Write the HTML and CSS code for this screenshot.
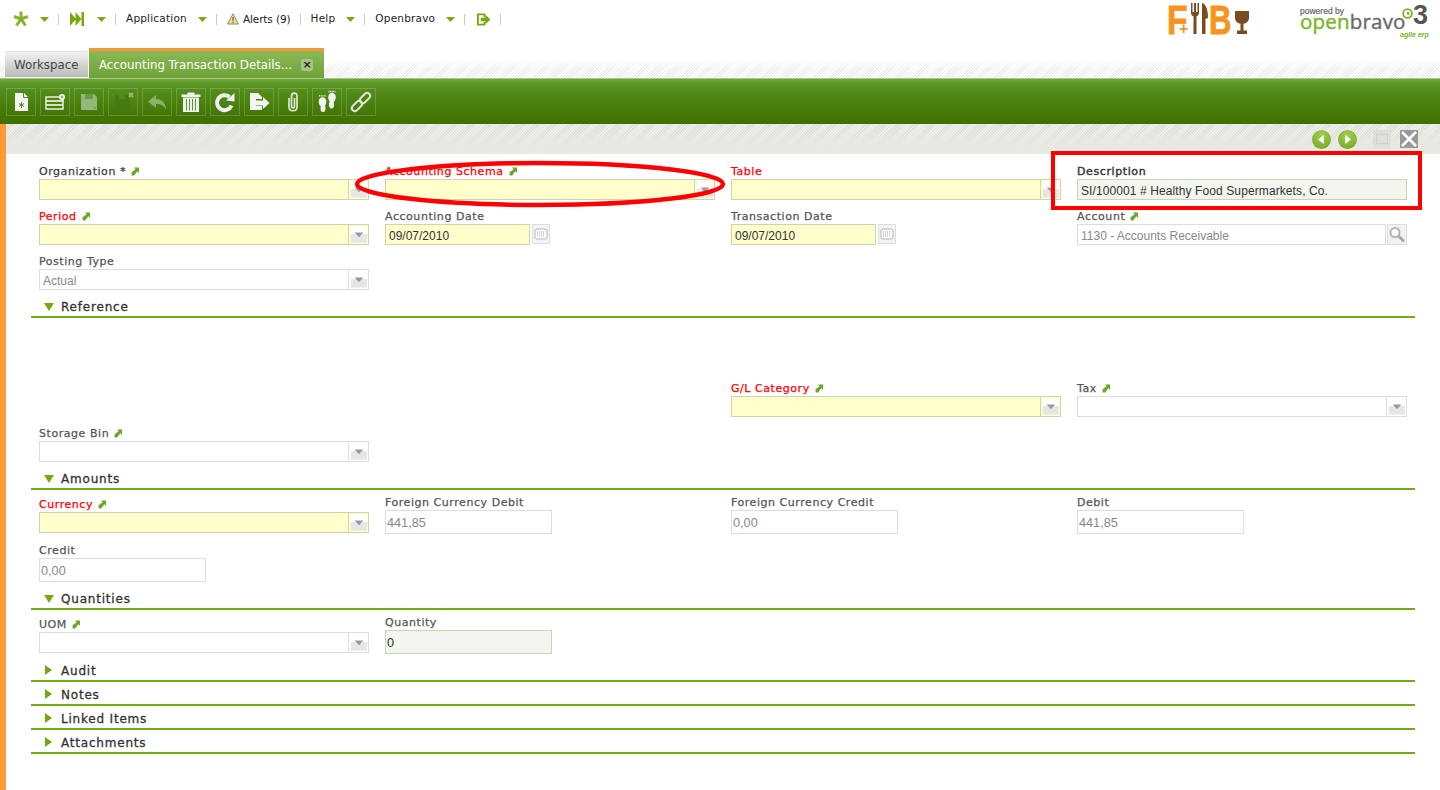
FILE: index.html
```html
<!DOCTYPE html>
<html lang="en">
<head>
<meta charset="utf-8">
<title>Accounting Transaction Details</title>
<link rel="stylesheet" href="styles.css">
</head>
<body>
<svg class="defs" width="0" height="0">
  <symbol id="jump" viewBox="0 0 8 9"><path d="M3 .5H8V6L6.300 4.300L3.200 8.500H.6V5.200L4.600 2.200Z" fill="#6ba52a"/></symbol>
  <symbol id="down" viewBox="0 0 10 6" preserveAspectRatio="none"><path d="M0 0H10L5 6Z" fill="#76a80f"/></symbol>
  <symbol id="right" viewBox="0 0 7 10" preserveAspectRatio="none"><path d="M0 0L7 5L0 10Z" fill="#6fa80f"/></symbol>
  <symbol id="drop" viewBox="0 0 20 19"><rect x="2" y="1" width="17" height="17" fill="#fff"/><rect x="2" y="9" width="17" height="9" fill="#e6e6e6"/><path d="M6 7.500H15L10.500 12.500Z" fill="#999"/></symbol>
  <symbol id="cal" viewBox="0 0 18 20"><rect x=".5" y=".5" width="17" height="19" fill="#f4f4f4" stroke="#ddd"/><rect x="3" y="5" width="12" height="10" rx="2" fill="#fff" stroke="#b5b5b5"/><path d="M5 8H13M5 10H13M5 12H13" stroke="#aaa" stroke-dasharray="1 1"/></symbol>
</svg>

<header class="nav">
  <div class="nav-menu">
    <svg class="ic-star" viewBox="0 0 16 16"><path d="M8 8V.5M8 8L1 5.500M8 8L15 5.500M8 8L3.500 14.500M8 8L12.500 14.500" stroke="#85b52d" stroke-width="3" fill="none"/></svg>
    <svg class="caret"><use href="#down"/></svg>
    <span class="sep"></span>
    <svg class="ic-next" viewBox="0 0 14 14"><path d="M0 0L6 7L0 14ZM5.500 0L11.500 7L5.500 14Z" fill="#76a80f"/><rect x="11.500" y="0" width="2.500" height="14" fill="#76a80f"/></svg>
    <svg class="caret wide-gap"><use href="#down"/></svg>
    <span class="sep"></span>
    <span class="nav-item">Application</span>
    <svg class="caret"><use href="#down"/></svg>
    <span class="sep"></span>
    <svg class="ic-warn" viewBox="0 0 12 12"><path d="M6 .8L11.500 11H.5Z" fill="#f2dc8a" stroke="#8d8a6d"/><path d="M6 4V8M6 9V10" stroke="#444"/></svg>
    <span class="nav-item alerts">Alerts (9)</span>
    <span class="sep"></span>
    <span class="nav-item">Help</span>
    <svg class="caret"><use href="#down"/></svg>
    <span class="sep"></span>
    <span class="nav-item">Openbravo</span>
    <svg class="caret"><use href="#down"/></svg>
    <span class="sep"></span>
    <svg class="ic-exit" viewBox="0 0 15 13"><path d="M0 0H9V4H7V2H2V11H7V9H9V13H0Z" fill="#76a80f"/><path d="M4 4.500H9V1.500L14.500 6.500L9 11.500V8.500H4Z" fill="#76a80f"/></svg>
    <span class="sep"></span>
  </div>
  <div class="brand">
    <div class="fb">
      <span class="fb-f">F</span><span class="fb-plus">+</span>
      <svg class="fb-cut" viewBox="0 0 17 31"><path d="M0 0H1.500V9H3V0H5V9H6.500V0H8V10C8 12 6.500 13 5.500 13.500V31H2.500V13.500C1.500 13 0 12 0 10ZM11 0C15 1 17 7 17 15L14.500 16V31H11Z" fill="#7a4a21"/></svg>
      <span class="fb-b">B</span>
      <svg class="fb-glass" viewBox="0 0 14 23"><path d="M0 0H14V7C14 10.500 11 12.500 8.500 12.800V19.500H12V23H2V19.500H5.500V12.800C3 12.500 0 10.500 0 7Z" fill="#7a4a21"/></svg>
    </div>
    <div class="ob">
      <span class="ob-pow">powered by</span>
      <span class="ob-name"><span class="ob-g">open</span>bravo</span>
      <span class="ob-agile">agile erp</span>
      <svg class="ob-swirl" viewBox="0 0 10 10"><circle cx="5" cy="5" r="4" fill="none" stroke="#78b428" stroke-width="1.600"/><circle cx="5.500" cy="5" r="1.300" fill="#78b428"/></svg>
      <span class="ob-three">3</span>
    </div>
  </div>
</header>

<nav class="tabs">
  <div class="tab-ws">Workspace</div>
  <div class="tab-active">
    <span>Accounting Transaction Details...</span>
    <span class="tab-x">×</span>
  </div>
</nav>

<div class="toolbar">
  <button class="tb"><svg viewBox="0 0 24 24"><path d="M6 3H15L19 7V21H6Z" fill="#f4f4f4"/><path d="M14.500 3V7.500H19" fill="none" stroke="#4f8a1f"/><path d="M12.500 12V18M10 13.500L15 16.500M15 13.500L10 16.500" stroke="#4f8a1f"/></svg></button>
  <button class="tb"><svg viewBox="0 0 24 24"><rect x="3" y="7" width="17" height="12" fill="none" stroke="#fff" stroke-width="1.300"/><path d="M3 11H20M3 15H20" stroke="#fff" stroke-width="1.300"/><circle cx="19" cy="7" r="3" fill="#fff"/><path d="M17.500 7H20.500M19 5.500V8.500" stroke="#4f8a1f" stroke-width=".8"/></svg></button>
  <button class="tb"><svg viewBox="0 0 24 24"><path d="M4 4H17L20 7V20H4Z" fill="#94b878"/><rect x="8" y="4" width="8" height="5" fill="#6a9c44"/><rect x="17" y="17" width="1.500" height="1.500" fill="#5a8c30"/></svg></button>
  <button class="tb"><svg viewBox="0 0 24 24"><path d="M4 5H16L19 8V20H4Z" fill="#437a14"/><rect x="8" y="5" width="6" height="4" fill="#4f8a1f"/><path d="M18 3L22 7M22 3L18 7" stroke="#98b87c" stroke-width="2"/></svg></button>
  <button class="tb"><svg viewBox="0 0 24 24"><path d="M11 5V9C17 9 21 13 21 20C19 15 16 14 11 14V18L3 11.500Z" fill="#8cb26c"/></svg></button>
  <button class="tb"><svg viewBox="0 0 24 24"><path d="M2.500 4.500H21.500V7H2.500ZM8.500 2.500H15.500V4.500H8.500ZM4 7.500H20V22H4Z" fill="#f0f0f0"/><path d="M7.500 9V20.500M10.500 9V20.500M13.500 9V20.500M16.500 9V20.500" stroke="#5d9430" stroke-width="1"/></svg></button>
  <button class="tb"><svg viewBox="0 0 24 24"><path d="M18.500 15.500A7.500 7.500 0 1 1 16.500 7" fill="none" stroke="#f0f0f0" stroke-width="4"/><path d="M13 10.500L21.500 11.500V3Z" fill="#f0f0f0"/></svg></button>
  <button class="tb"><svg viewBox="0 0 24 24"><path d="M3 3H11L15 7V9H9V16H15V20H3Z" fill="#f4f4f4"/><path d="M9 10.500H16V7L22.500 13L16 19V15.500H9Z" fill="#f4f4f4"/></svg></button>
  <button class="tb"><svg viewBox="0 0 24 24"><path d="M8 8V17C8 22 16 22 16 17V6.500C16 2 10.500 2 10.500 6.500V16C10.500 18.500 13.500 18.500 13.500 16V8" fill="none" stroke="#dfe6d8" stroke-width="1.700"/></svg></button>
  <button class="tb"><svg viewBox="0 0 24 24" fill="#f4f4f4"><ellipse cx="7.500" cy="12" rx="3.800" ry="4.800"/><ellipse cx="8" cy="18.500" rx="2.500" ry="3.500"/><ellipse cx="17" cy="7.500" rx="3.800" ry="4.800"/><ellipse cx="16.500" cy="14.500" rx="2.500" ry="4"/><path d="M4 5.800H11M13.500 1.500H20.500" stroke="#f4f4f4" stroke-width="1.300" stroke-dasharray="1 .6"/></svg></button>
  <button class="tb"><svg viewBox="0 0 24 24" fill="none" stroke="#dfe3da" stroke-width="2"><rect x="2" y="13" width="12" height="6" rx="3" transform="rotate(-45 8 16)"/><rect x="10" y="5" width="12" height="6" rx="3" transform="rotate(-45 16 8)"/></svg></button>
</div>

<main class="content">
  <div class="status">
    <span class="round"><svg viewBox="0 0 8 8"><path d="M6 0V8L1 4Z" fill="#fff"/></svg></span>
    <span class="round"><svg viewBox="0 0 8 8"><path d="M2 0V8L7 4Z" fill="#fff"/></svg></span>
    <span class="max"><span></span></span>
    <span class="close"><svg viewBox="0 0 18 18"><path d="M2 2L16 16M16 2L2 16" stroke="#fff" stroke-width="2.600"/></svg></span>
  </div>

  <form class="form">
    <div class="grid">
      <div class="field"><label class="lbl dk">Organization * <svg class="jump"><use href="#jump"/></svg></label><div class="combo req"><span class="val"></span><svg class="arrow"><use href="#drop"/></svg></div></div>
      <div class="field"><label class="lbl red">Accounting Schema <svg class="jump"><use href="#jump"/></svg></label><div class="combo req"><span class="val"></span><svg class="arrow"><use href="#drop"/></svg></div></div>
      <div class="field"><label class="lbl red">Table</label><div class="combo req"><span class="val"></span><svg class="arrow"><use href="#drop"/></svg></div></div>
      <div class="field"><label class="lbl strong">Description</label><div class="input ro wide"><span class="val dark spaced">SI/100001 # Healthy Food Supermarkets, Co.</span></div></div>

      <div class="field"><label class="lbl red">Period <svg class="jump"><use href="#jump"/></svg></label><div class="combo req"><span class="val"></span><svg class="arrow"><use href="#drop"/></svg></div></div>
      <div class="field"><label class="lbl">Accounting Date</label><div class="date"><div class="input req d"><span class="val dark">09/07/2010</span></div><svg class="cal"><use href="#cal"/></svg></div></div>
      <div class="field"><label class="lbl">Transaction Date</label><div class="date"><div class="input req d"><span class="val dark">09/07/2010</span></div><svg class="cal"><use href="#cal"/></svg></div></div>
      <div class="field"><label class="lbl">Account <svg class="jump"><use href="#jump"/></svg></label><div class="search"><div class="input plain grow"><span class="val">1130 - Accounts Receivable</span></div><svg class="lens" viewBox="0 0 21 21"><rect x="1.500" y=".5" width="19" height="20" fill="#f2f2f2" stroke="#ddd"/><circle cx="9" cy="8.500" r="4.500" fill="#fff" stroke="#b5b5b5" stroke-width="2"/><path d="M12.500 12L18 17.500" stroke="#aaa" stroke-width="3"/></svg></div></div>

      <div class="field"><label class="lbl">Posting Type</label><div class="combo"><span class="val">Actual</span><svg class="arrow"><use href="#drop"/></svg></div></div>
    </div>

    <h2 class="sec"><svg class="tri"><use href="#down"/></svg>Reference</h2>
    <div class="grid after-ref">
      <div class="field c3"><label class="lbl red">G/L Category <svg class="jump"><use href="#jump"/></svg></label><div class="combo req"><span class="val"></span><svg class="arrow"><use href="#drop"/></svg></div></div>
      <div class="field"><label class="lbl">Tax <svg class="jump"><use href="#jump"/></svg></label><div class="combo"><span class="val"></span><svg class="arrow"><use href="#drop"/></svg></div></div>
      <div class="field c1"><label class="lbl">Storage Bin <svg class="jump"><use href="#jump"/></svg></label><div class="combo"><span class="val"></span><svg class="arrow"><use href="#drop"/></svg></div></div>
    </div>

    <h2 class="sec"><svg class="tri"><use href="#down"/></svg>Amounts</h2>
    <div class="grid">
      <div class="field"><label class="lbl red">Currency <svg class="jump"><use href="#jump"/></svg></label><div class="combo req"><span class="val"></span><svg class="arrow"><use href="#drop"/></svg></div></div>
      <div class="field numf"><label class="lbl">Foreign Currency Debit</label><div class="input plain num"><span class="val">441,85</span></div></div>
      <div class="field numf"><label class="lbl">Foreign Currency Credit</label><div class="input plain num"><span class="val">0,00</span></div></div>
      <div class="field numf"><label class="lbl">Debit</label><div class="input plain num"><span class="val">441,85</span></div></div>
      <div class="field tall"><label class="lbl">Credit</label><div class="input plain num"><span class="val">0,00</span></div></div>
    </div>

    <h2 class="sec"><svg class="tri"><use href="#down"/></svg>Quantities</h2>
    <div class="grid">
      <div class="field"><label class="lbl">UOM <svg class="jump"><use href="#jump"/></svg></label><div class="combo"><span class="val"></span><svg class="arrow"><use href="#drop"/></svg></div></div>
      <div class="field numf"><label class="lbl">Quantity</label><div class="input ro num"><span class="val dark">0</span></div></div>
    </div>

    <h2 class="sec closed"><svg class="tri-r"><use href="#right"/></svg>Audit</h2>
    <h2 class="sec closed"><svg class="tri-r"><use href="#right"/></svg>Notes</h2>
    <h2 class="sec closed"><svg class="tri-r"><use href="#right"/></svg>Linked Items</h2>
    <h2 class="sec closed"><svg class="tri-r"><use href="#right"/></svg>Attachments</h2>
  </form>
</main>

<svg class="mark-ellipse" viewBox="0 0 372 52"><ellipse cx="186" cy="26" rx="183" ry="21" fill="none" stroke="#ff0000" stroke-width="4.500"/></svg>
<div class="mark-rect"></div>
</body>
</html>
```
FILE: styles.css
```css
* { box-sizing: border-box; }
html, body { margin: 0; padding: 0; height: 790px; overflow: hidden; background: #fff; }
body { position: relative; font-family: "DejaVu Sans", Verdana, sans-serif; color: #333; }
.defs { position: absolute; }

.nav { height: 48px; display: flex; justify-content: space-between; }
.nav-menu { display: flex; align-items: center; height: 38px; padding-left: 13px; font-size: 10.500px; color: #222; }
.nav-item { letter-spacing: .2px; white-space: nowrap; position: relative; top: -1px; }
.nav-item.alerts { letter-spacing: -.1px; top: 0; }
.ic-star { width: 16px; height: 16px; }
.caret { width: 9px; height: 5px; margin-left: 11px; }
.caret.wide-gap { margin-left: 13px; }
.sep { width: 1px; height: 11px; background: #c8c8c8; margin: 0 10px 0 9px; }
.ic-next { width: 14px; height: 14px; margin-left: 1px; }
.ic-warn { width: 12px; height: 12px; margin-right: 4px; }
.ic-exit { width: 14px; height: 13px; margin-left: 2px; }

.brand { position: relative; width: 280px; }
.fb { position: absolute; left: 9px; top: 3px; width: 90px; height: 32px; }
.fb-f, .fb-b { position: absolute; top: 2px; font: bold 40px/30px "Liberation Sans", sans-serif; color: #f7941d; -webkit-text-stroke: .8px #f7941d; transform-origin: 0 50%; }
.fb-f { left: -2px; transform: scaleX(.84); }
.fb-b { left: 40px; transform: scaleX(.78); }
.fb-plus { position: absolute; left: 10px; top: 19px; font: bold 16px/14px "Liberation Sans", sans-serif; color: #f7941d; }
.fb-cut { position: absolute; left: 22px; top: 0; width: 17px; height: 31px; }
.fb-glass { position: absolute; left: 66px; top: 8px; width: 14px; height: 23px; }
.ob { position: absolute; left: 119px; top: 2px; width: 150px; height: 40px; }
.ob-pow { position: absolute; left: 21px; top: 5px; font: 8.500px/8px "Liberation Sans", sans-serif; color: #666; -webkit-text-stroke: .2px #666; white-space: nowrap; }
.ob-name { position: absolute; left: 21px; top: 13px; font: 20.500px/12px "Open Sans", sans-serif; letter-spacing: .2px; color: #6b6b6b; -webkit-text-stroke: .4px #6b6b6b; white-space: nowrap; }
.ob-g { color: #78b428; -webkit-text-stroke: .4px #78b428; }
.ob-agile { position: absolute; left: 121px; top: 29px; font: italic bold 7px/8px "Liberation Sans", sans-serif; color: #78b428; white-space: nowrap; }
.ob-swirl { position: absolute; left: 123px; top: 6px; width: 11px; height: 11px; }
.ob-three { position: absolute; left: 134px; top: -2px; font: bold 27px/30px "Liberation Sans", sans-serif; color: #555; }

.tabs { height: 30px; display: flex; align-items: flex-end; padding-left: 5px;
  background: linear-gradient(#fff 12px, rgba(255,255,255,0) 22px), repeating-linear-gradient(135deg, #ececec 0 1px, #fff 1px 2px); }
.tab-ws { width: 84px; height: 27px; padding: 6px 0 0 9px; font: 11.800px/14px "DejaVu Sans", sans-serif; color: #444; background: linear-gradient(#f2f2f2, #b9bab6); border-top: 1px solid #e4e4e4; border-right: 1px solid #fff; border-bottom: 1px solid #f4f4f4; }
.tab-active { width: 235px; height: 30px; border-top: 3px solid #f7973a; background: linear-gradient(#8bb954, #6ea338); color: #fff; font-size: 11.800px; line-height: 14px; padding: 7px 0 0 10px; display: flex; align-items: flex-start; white-space: nowrap; }
.tab-x { width: 12px; height: 12px; margin: 1px 0 0 9px; border-radius: 3px; background: #a8c488; color: #222; font: bold 11px/12px "DejaVu Sans", sans-serif; text-align: center; }

.toolbar { height: 46px; display: flex; align-items: center; gap: 4px; padding-left: 6px; background: linear-gradient(#6fa43c 0, #5f9a28 4px, #528c1a 12px, #457a08 32px, #3f6f00 100%); border-top: 1px solid #a9c98a; }
.tb { width: 30px; height: 28px; padding: 0; background: transparent; border: 1px solid rgba(255,255,255,.18); display: flex; align-items: center; justify-content: center; }
.tb svg { width: 24px; height: 24px; }

.content { border-left: 6px solid #ff9933; height: 666px; }
.status { height: 30px; display: flex; align-items: center; justify-content: flex-end; padding-right: 22px;
  background: linear-gradient(rgba(231,233,227,0), #e7e9e3 85%), repeating-linear-gradient(135deg, #dcdcd8 0 1px, #f2f2ef 1px 2px); }
.round { width: 19px; height: 19px; border-radius: 50%; margin-left: 7px; background: radial-gradient(circle at 50% 30%, #a5cf53, #6ea31b); display: flex; align-items: center; justify-content: center; }
.round svg { width: 9px; height: 9px; }
.max { width: 18px; height: 18px; background: #dfdfdb; margin-left: 16px; display: flex; align-items: center; justify-content: center; }
.max span { width: 12px; height: 10px; border: 1px solid #cfcfcb; }
.close { width: 18px; height: 18px; background: #999; margin-left: 9px; }
.close svg { display: block; width: 18px; height: 18px; }

.form { padding: 8px 25px 0 25px; }
.grid { display: grid; grid-template-columns: repeat(4, 346px); padding-left: 8px; }
.field { height: 45px; padding-top: 1px; }
.numf { margin-top: -2px; height: 48px; }
.tall { height: 48px; }
.c3 { grid-column: 3; }
.c1 { grid-column: 1; }
.after-ref { padding-top: 56px; }
.lbl { display: block; height: 16px; font-size: 11px; line-height: 18px; letter-spacing: .55px; color: #555; -webkit-text-stroke: .25px #555; white-space: nowrap; }
.lbl.dk { color: #3c3c3c; -webkit-text-stroke-color: #3c3c3c; }
.lbl.red { color: #f00; -webkit-text-stroke-color: #f00; }
.lbl.strong { color: #333; -webkit-text-stroke: .4px #333; letter-spacing: .6px; }
.jump { width: 8px; height: 9px; margin-left: 1px; vertical-align: -1px; }
.val { display: block; font: 12px/22px "Liberation Sans", sans-serif; color: #888; padding-left: 3px; white-space: nowrap; flex: 1; }
.val.dark { color: #333; }
.val.spaced { letter-spacing: .1px; }

.combo, .input { height: 21px; border: 1px solid #ddd; background: #fff; }
.combo { width: 330px; display: flex; }
.combo .arrow { width: 20px; height: 19px; border-left: 1px solid #ddd; flex: none; }
.req { background: #ffffcc; border-color: #cdd4b2; }
.combo.req .arrow { border-left-color: #cdd4b2; }
.input.ro { background: #f2f6ee; border-color: #ccd4b8; }
.input.wide { width: 330px; }
.num { width: 167px; height: 24px; }
.num .val { font-size: 12.700px; line-height: 24px; padding-left: 1px; }
.date { display: flex; align-items: flex-start; gap: 2px; }
.d { width: 145px; }
.cal { width: 18px; height: 20px; }
.search { display: flex; width: 330px; }
.grow { width: 309px; }
.lens { width: 21px; height: 21px; }

.sec { position: relative; height: 21px; margin: 0 0 5px; padding: 3px 0 0 30px; border-bottom: 2px solid #72aa14; font-size: 12px; line-height: 15px; font-weight: 400; letter-spacing: .8px; color: #333; -webkit-text-stroke: .3px #333; }
.sec .tri { position: absolute; left: 13px; top: 6px; width: 10px; height: 8px; }
.sec.closed { height: 24px; margin: 0; padding-top: 6px; }
.grid + .sec.closed { margin-top: -3px; }
.sec .tri-r { position: absolute; left: 14px; top: 7px; width: 7px; height: 10px; }

.mark-ellipse { position: absolute; left: 354px; top: 158px; width: 372px; height: 52px; }
.mark-rect { position: absolute; left: 1051px; top: 151px; width: 371px; height: 59px; border: 4px solid #ff0000; }
```
